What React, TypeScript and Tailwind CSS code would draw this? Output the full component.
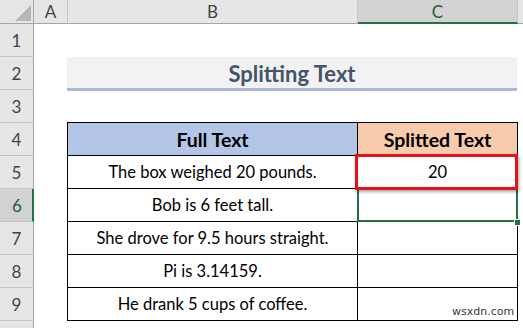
const rows = [
  { text: "The box weighed 20 pounds.", value: "20" },
  { text: "Bob is 6 feet tall.", value: "" },
  { text: "She drove for 9.5 hours straight.", value: "" },
  { text: "Pi is 3.14159.", value: "" },
  { text: "He drank 5 cups of coffee.", value: "" },
];

export default function App() {
  const rowNums = [1, 2, 3, 4, 5, 6, 7, 8, 9];

  return (
    <div
      className="relative w-[523px] h-[328px] overflow-hidden bg-white flex flex-col"
      style={{ fontFamily: "Lato, 'Open Sans', sans-serif" }}
    >
      {/* column headers */}
      <div className="flex h-[24px] shrink-0 text-[17px] text-[#444]">
        <div className="relative w-[34px] h-full bg-[#e6e6e6] border-r border-b border-[#a6a6a6]">
          <svg className="absolute left-[15px] top-[5px]" width="16" height="16" viewBox="0 0 16 16">
            <polygon points="16,0 16,16 0,16" fill="#b7b7b7" />
          </svg>
        </div>
        <div className="w-[34px] h-full bg-[#e6e6e6] border-r border-r-[#c6c6c6] border-b border-b-[#a6a6a6] flex items-center justify-center">
          A
        </div>
        <div className="w-[290px] h-full bg-[#e6e6e6] border-r border-r-[#c6c6c6] border-b border-b-[#a6a6a6] flex items-center justify-center">
          B
        </div>
        <div className="w-[160px] h-full bg-[#d2d2d2] border-r border-r-[#c6c6c6] border-b-2 border-b-[#217346] text-[#1e5e3b] flex items-center justify-center pt-[2px]">
          C
        </div>
        <div className="flex-1 h-full bg-[#e6e6e6] border-b border-[#a6a6a6]" />
      </div>

      <div className="flex flex-1">
        {/* row headers */}
        <div className="w-[34px] shrink-0 flex flex-col text-[17px] text-[#444]">
          {rowNums.map((n) =>
            n === 6 ? (
              <div
                key={n}
                className="h-[33px] shrink-0 bg-[#d2d2d2] border-b border-b-[#c6c6c6] border-r-2 border-r-[#217346] text-[#1e5e3b] flex items-center justify-center pl-[2px] pt-[2px]"
              >
                {n}
              </div>
            ) : (
              <div
                key={n}
                className="h-[33px] shrink-0 bg-[#e6e6e6] border-b border-b-[#c6c6c6] border-r border-r-[#a6a6a6] flex items-center justify-center pt-[2px]"
              >
                {n}
              </div>
            )
          )}
          <div className="flex-1 bg-[#e6e6e6] border-r border-r-[#a6a6a6]" />
        </div>

        {/* sheet body */}
        <div className="relative flex-1 pl-[33px] pt-[33px]">
          <div className="w-[450px] h-[34px] bg-[#f2f2f2] border-b-[3px] border-[#a9b9dc] flex items-center justify-center text-[22px] font-bold text-[#44546a] pt-[1px]">
            Splitting Text
          </div>

          <div className="mt-[31px] w-[451px] grid grid-cols-[290px_160px] border-l border-t border-black text-[16.5px] text-black">
            <div className="h-[33px] bg-[#b4c6e7] border-r border-b border-black flex items-center justify-center font-bold text-[19.5px] pt-[2px]">
              Full Text
            </div>
            <div className="h-[33px] bg-[#f8cbad] border-r border-b border-black flex items-center justify-center font-bold text-[19.5px] pt-[2px]">
              Splitted Text
            </div>
            {rows.map((r) => (
              <>
                <div
                  key={r.text}
                  className="h-[33px] border-r border-b border-black flex items-center justify-center pt-[1px]"
                >
                  {r.text}
                </div>
                <div
                  key={r.text + "v"}
                  className="h-[33px] border-r border-b border-black flex items-center justify-center pt-[1px]"
                >
                  {r.value}
                </div>
              </>
            ))}
          </div>

          {/* selected cell C6 */}
          <div className="absolute left-[323px] top-[164px] w-[161px] h-[34px] border-2 border-[#217346]" />
          <div className="absolute left-[480px] top-[195px] w-[5px] h-[5px] bg-[#217346] border border-white box-content" />

          {/* red highlight on C5 */}
          <div className="absolute left-[321px] top-[130px] w-[163px] h-[36px] border-[3px] border-[#e8101a] shadow-[1px_2px_3px_rgba(0,0,0,0.35)]" />
        </div>
      </div>

      <div
        className="absolute left-[452px] top-[306px] text-[11px] text-[#3a3a3a] leading-none"
        style={{ fontFamily: "'DejaVu Sans', sans-serif" }}
      >
        wsxdn.com
      </div>
    </div>
  );
}
